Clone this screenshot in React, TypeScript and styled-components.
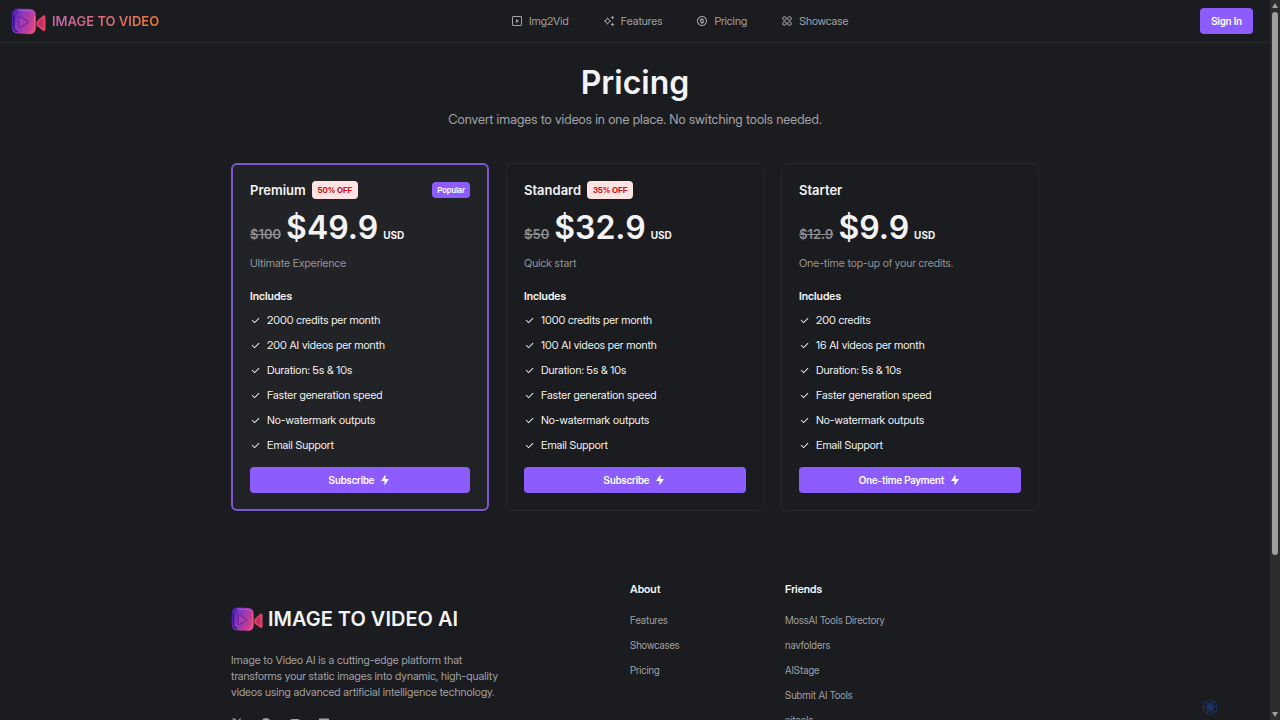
import React from "react";
import styled, { createGlobalStyle, css } from "styled-components";
import {
  RiMoneyDollarCircleLine,
  RiApps2Line,
  RiCheckLine,
  RiFlashlightFill,
  RiTwitterXFill,
  RiGithubFill,
  RiYoutubeFill,
  RiMailFill,
} from "react-icons/ri";

const headingFont = `Inter, "Liberation Sans", sans-serif`;

const GlobalStyle = createGlobalStyle`
  * { box-sizing: border-box; }
  body {
    margin: 0;
    background: #1b1c1f;
    color: #f3f3f4;
    font-family: "Inter Display", Inter, "Liberation Sans", sans-serif;
    font-size: 11px;
    line-height: 16px;
  }
  h1, h2, h3, p, ul { margin: 0; padding: 0; }
  ul { list-style: none; }
  a { color: inherit; text-decoration: none; }
  button { font-family: inherit; border: 0; cursor: pointer; }
`;

const Shell = styled.div`
  display: flex;
  height: 100vh;
  overflow: hidden;
`;

const Page = styled.div`
  flex: 1;
  min-width: 0;
  overflow: hidden;
`;

const Header = styled.header`
  display: flex;
  align-items: center;
  justify-content: space-between;
  height: 43px;
  padding: 0 17px 0 11px;
  border-bottom: 1px solid #28292d;
`;

const Brand = styled.a`
  display: flex;
  align-items: center;
  gap: 6px;
`;

const BrandName = styled.span`
  font-family: ${headingFont};
  font-size: 13px;
  font-weight: 600;
  background: linear-gradient(90deg, #c561b0, #ee7a35);
  background-clip: text;
  -webkit-background-clip: text;
  color: transparent;
`;

const Nav = styled.nav`
  display: flex;
  gap: 34px;
`;

const NavLink = styled.a`
  display: flex;
  align-items: center;
  gap: 6px;
  color: #a2a2a6;
`;

const PrimaryButton = styled.button<{ $block?: boolean }>`
  display: flex;
  align-items: center;
  justify-content: center;
  gap: 5px;
  height: 26px;
  padding: 0 11px;
  border-radius: 4px;
  background: #8c5cff;
  color: #ffffff;
  font-size: 10px;
  font-weight: 600;
  ${(p) => p.$block && css`width: 100%;`}
`;

const Container = styled.div`
  width: calc(100% - 32px);
  max-width: 808px;
  margin: 0 auto;
`;

const Intro = styled.section`
  padding: 19px 0 36px;
  text-align: center;
`;

const Title = styled.h1`
  font-family: ${headingFont};
  font-size: 32px;
  line-height: 42px;
  font-weight: 600;
`;

const Subtitle = styled.p`
  margin-top: 7px;
  font-size: 13px;
  color: #a2a2a6;
`;

const Plans = styled.section`
  display: grid;
  grid-template-columns: repeat(3, 1fr);
  gap: 17px;
`;

const Card = styled.article<{ $featured?: boolean }>`
  padding: 17px;
  border-radius: 6px;
  border: 1px solid #26272b;
  ${(p) =>
    p.$featured &&
    css`
      padding: 16px 17px;
      border: 2px solid #7d57d1;
      background: #222327;
    `}
`;

const CardHead = styled.div`
  display: flex;
  align-items: center;
  gap: 6px;
  height: 18px;
`;

const PlanName = styled.h2`
  font-family: ${headingFont};
  font-size: 13px;
  font-weight: 600;
`;

const Discount = styled.span`
  padding: 1px 6px;
  border-radius: 4px;
  background: #ffe2e2;
  color: #c4141c;
  font-size: 8px;
  font-weight: 700;
`;

const Popular = styled.span`
  margin-left: auto;
  padding: 0 5px;
  border-radius: 4px;
  background: #8c5cff;
  color: #ffffff;
  font-size: 8px;
  font-weight: 600;
`;

const PriceRow = styled.div`
  display: flex;
  align-items: baseline;
  gap: 5px;
  height: 40px;
  margin-top: 9px;
  font-family: ${headingFont};
  font-weight: 600;
  line-height: 40px;
`;

const OldPrice = styled.s`
  font-size: 13px;
  color: #8e8e92;
`;

const Price = styled.span`
  font-size: 32px;
`;

const Currency = styled.span`
  font-size: 10px;
  font-weight: 700;
`;

const Tagline = styled.p`
  margin-top: 7px;
  color: #96969a;
`;

const IncludesTitle = styled.h3`
  margin-top: 17px;
  font-size: 11px;
  font-weight: 600;
`;

const FeatureList = styled.ul`
  display: flex;
  flex-direction: column;
  gap: 9px;
  margin: 8px 0 14px;
`;

const Feature = styled.li`
  display: flex;
  align-items: center;
  gap: 6px;
`;

const Footer = styled.footer`
  display: flex;
  margin-top: 70px;
`;

const FooterBrandCol = styled.div`
  width: 399px;
  padding-top: 24px;
`;

const FooterBrand = styled.div`
  display: flex;
  align-items: center;
  gap: 5px;
`;

const FooterName = styled.span`
  font-family: ${headingFont};
  font-size: 20px;
  line-height: 28px;
  font-weight: 600;
`;

const FooterText = styled.p`
  max-width: 276px;
  margin: 19px 0 17px;
  color: #a2a2a6;
`;

const Socials = styled.div`
  display: flex;
  gap: 17px;
  color: #a2a2a6;
`;

const LinkCol = styled.nav`
  width: 155px;
`;

const LinkHead = styled.h3`
  font-size: 11px;
  font-weight: 600;
`;

const LinkList = styled.ul`
  display: flex;
  flex-direction: column;
  gap: 9px;
  margin-top: 15px;
  font-size: 10px;
  color: #a2a2a6;
`;

const ScrollTrack = styled.div`
  display: flex;
  flex-direction: column;
  align-items: center;
  width: 10px;
  padding: 3px 0;
  background: #2c2c2c;
`;

const ScrollThumb = styled.div`
  flex: 0 0 76%;
  width: 6px;
  margin: 4px 0 auto;
  border-radius: 3px;
  background: #9f9f9f;
`;

const Assistant = styled.button`
  position: fixed;
  right: 62px;
  bottom: 5px;
  padding: 0;
  width: 16px;
  height: 16px;
  background: transparent;
`;

function CameraLogo({ width, id }: { width: number; id: string }) {
  return (
    <svg width={width} height={(width * 27) / 35} viewBox="0 0 35 27" aria-hidden="true">
      <defs>
        <linearGradient id={id} x1="0" y1="0.3" x2="1" y2="0.7">
          <stop offset="0" stopColor="#4a1fb0" />
          <stop offset="0.3" stopColor="#8438c0" />
          <stop offset="0.7" stopColor="#b83c9c" />
          <stop offset="1" stopColor="#e0447c" />
        </linearGradient>
      </defs>
      <path d="M25.500 13.500l6.500-6q2.300-1 2.500 1.500v12q-.2 2.800-2.500 1.800l-6.500-5z" fill="#e04068" />
      <path d="M27.500 13.800l4.500-4v10.400l-4.500-3.400z" fill="#c02f62" />
      <path d="M6.500 .5L19 1.100q5.500.4 5.800 5.600v13.500q-.4 5.600-5.800 6L6.500 25.500Q1 24.900.8 19.500V6.500Q1 .9 6.500 .5z" fill={`url(#${id})`} />
      <path d="M2.600 7v12q.2 4 4 4.400" fill="none" stroke="#32138c" strokeWidth="1.400" />
      <path d="M7 2.200l12 .6q4 .3 4.200 4.300" fill="none" stroke="#a860dc" strokeWidth="1" />
      <path d="M23.600 8v12q-.3 4.200-4.300 4.700" fill="none" stroke="#f0608c" strokeWidth="1" />
      <path d="M7.800 9.500v9.200q.2 1.200 1.300.6l8-4.700q.8-.6 0-1.200l-8-4.500q-1.100-.5-1.300.6z" fill="#a43bb4" stroke="#6c1c90" strokeWidth="1" />
    </svg>
  );
}

function PlaySquareIcon() {
  return (
    <svg width="12" height="12" viewBox="0 0 24 24" fill="none" stroke="currentColor" strokeWidth="2" aria-hidden="true">
      <rect x="3" y="3" width="18" height="18" rx="1" />
      <path d="M10 8l6 4-6 4z" fill="currentColor" stroke="none" />
    </svg>
  );
}

function SparklesIcon() {
  return (
    <svg width="12" height="12" viewBox="0 0 24 24" fill="none" stroke="currentColor" strokeWidth="2" aria-hidden="true">
      <path d="M9 5.500q1 5.500 6.500 6.500-5.500 1-6.500 6.500-1-5.500-6.500-6.500Q8 11 9 5.500z" />
      <path d="M19 1l1.300 2.700L23 5l-2.700 1.300L19 9l-1.300-2.700L15 5l2.700-1.300zM19 15l1.300 2.700L23 19l-2.700 1.300L19 23l-1.300-2.700L15 19l2.700-1.300z" fill="currentColor" stroke="none" />
    </svg>
  );
}

function KnotIcon() {
  return (
    <svg width="16" height="16" viewBox="0 0 24 24" fill="none" stroke="#1b3466" strokeWidth="1.500" aria-hidden="true">
      {[0, 60, 120, 180, 240, 300].map((a) => (
        <path key={a} transform={`rotate(${a} 12 12)`} d="M7.500 9V5.500a4.200 4.200 0 0 1 7.500-3l3.500 2M9.500 6l6 3.500v4.500" />
      ))}
      <circle cx="12" cy="12" r="2.500" fill="#1d3f82" stroke="none" />
    </svg>
  );
}

interface Plan {
  name: string;
  discount?: string;
  popular?: boolean;
  old: string;
  price: string;
  tagline: string;
  features: string[];
  action: string;
}

const shared = ["Duration: 5s & 10s", "Faster generation speed", "No-watermark outputs", "Email Support"];

const plans: Plan[] = [
  { name: "Premium", discount: "50% OFF", popular: true, old: "$100", price: "$49.9", tagline: "Ultimate Experience", features: ["2000 credits per month", "200 AI videos per month", ...shared], action: "Subscribe" },
  { name: "Standard", discount: "35% OFF", old: "$50", price: "$32.9", tagline: "Quick start", features: ["1000 credits per month", "100 AI videos per month", ...shared], action: "Subscribe" },
  { name: "Starter", old: "$12.9", price: "$9.9", tagline: "One-time top-up of your credits.", features: ["200 credits", "16 AI videos per month", ...shared], action: "One-time Payment" },
];

const linkGroups = [
  { title: "About", links: ["Features", "Showcases", "Pricing"] },
  { title: "Friends", links: ["MossAI Tools Directory", "navfolders", "AIStage", "Submit AI Tools", "aitools"] },
];

function PlanCard({ plan }: { plan: Plan }) {
  return (
    <Card $featured={plan.popular}>
      <CardHead>
        <PlanName>{plan.name}</PlanName>
        {plan.discount && <Discount>{plan.discount}</Discount>}
        {plan.popular && <Popular>Popular</Popular>}
      </CardHead>
      <PriceRow>
        <OldPrice>{plan.old}</OldPrice>
        <Price>{plan.price}</Price>
        <Currency>USD</Currency>
      </PriceRow>
      <Tagline>{plan.tagline}</Tagline>
      <IncludesTitle>Includes</IncludesTitle>
      <FeatureList>
        {plan.features.map((f) => (
          <Feature key={f}>
            <RiCheckLine size={11} />
            {f}
          </Feature>
        ))}
      </FeatureList>
      <PrimaryButton $block type="button">
        {plan.action}
        <RiFlashlightFill size={12} />
      </PrimaryButton>
    </Card>
  );
}

export default function App() {
  return (
    <Shell>
      <GlobalStyle />
      <Page>
        <Header>
          <Brand href="#">
            <CameraLogo width={35} id="logo-header" />
            <BrandName>IMAGE TO VIDEO</BrandName>
          </Brand>
          <Nav>
            <NavLink href="#img2vid"><PlaySquareIcon />Img2Vid</NavLink>
            <NavLink href="#features"><SparklesIcon />Features</NavLink>
            <NavLink href="#pricing"><RiMoneyDollarCircleLine size={12} />Pricing</NavLink>
            <NavLink href="#showcase"><RiApps2Line size={12} />Showcase</NavLink>
          </Nav>
          <PrimaryButton type="button">Sign In</PrimaryButton>
        </Header>
        <Container>
          <Intro>
            <Title>Pricing</Title>
            <Subtitle>Convert images to videos in one place. No switching tools needed.</Subtitle>
          </Intro>
          <Plans>
            {plans.map((p) => <PlanCard key={p.name} plan={p} />)}
          </Plans>
          <Footer>
            <FooterBrandCol>
              <FooterBrand>
                <CameraLogo width={32} id="logo-footer" />
                <FooterName>IMAGE TO VIDEO AI</FooterName>
              </FooterBrand>
              <FooterText>
                Image to Video AI is a cutting-edge platform that transforms your static images into dynamic, high-quality videos using advanced artificial intelligence technology.
              </FooterText>
              <Socials>
                <a href="#x" aria-label="X"><RiTwitterXFill size={12} /></a>
                <a href="#github" aria-label="GitHub"><RiGithubFill size={12} /></a>
                <a href="#youtube" aria-label="YouTube"><RiYoutubeFill size={12} /></a>
                <a href="#mail" aria-label="Email"><RiMailFill size={12} /></a>
              </Socials>
            </FooterBrandCol>
            {linkGroups.map((g) => (
              <LinkCol key={g.title} aria-label={g.title}>
                <LinkHead>{g.title}</LinkHead>
                <LinkList>
                  {g.links.map((l) => <li key={l}><a href="#">{l}</a></li>)}
                </LinkList>
              </LinkCol>
            ))}
          </Footer>
        </Container>
      </Page>
      <ScrollTrack aria-hidden="true">
        <svg width="6" height="5" viewBox="0 0 6 5" fill="#9f9f9f"><path d="M3 0l3 5H0z" /></svg>
        <ScrollThumb />
        <svg width="6" height="5" viewBox="0 0 6 5" fill="#9f9f9f"><path d="M0 0h6L3 5z" /></svg>
      </ScrollTrack>
      <Assistant type="button" aria-label="Assistant"><KnotIcon /></Assistant>
    </Shell>
  );
}
